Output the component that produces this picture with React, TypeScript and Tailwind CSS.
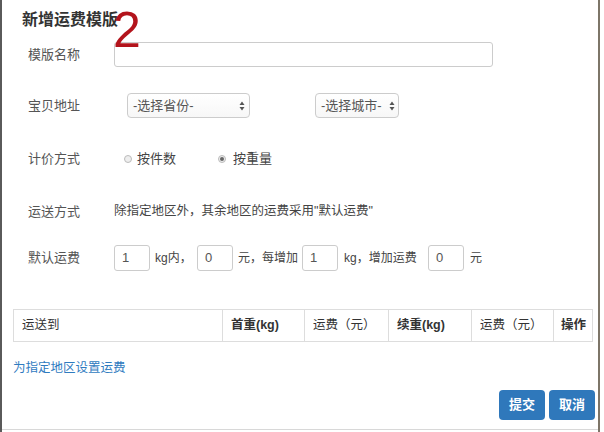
import React from "react";

const font = { fontFamily: '"Liberation Sans", "Noto Sans CJK SC", sans-serif' };

function Arrows() {
  return (
    <svg width="6" height="10" viewBox="0 0 6 10" className="shrink-0">
      <path d="M3 0.5 L5.5 4 L0.5 4 Z" fill="#555" />
      <path d="M3 9.5 L5.5 6 L0.5 6 Z" fill="#555" />
    </svg>
  );
}

function SmallInput({ v }: { v: string }) {
  return (
    <div className="w-[36px] h-[26px] shrink-0 border border-[#ccc] rounded-[3px] flex items-center pl-[7px] text-[13px] text-[#555] bg-white">
      {v}
    </div>
  );
}

function Radio({ checked }: { checked?: boolean }) {
  return (
    <span className="w-[8px] h-[8px] rounded-full border border-[#bbb] bg-[#eee] flex items-center justify-center">
      {checked && <span className="w-[4px] h-[4px] rounded-full bg-[#666]" />}
    </span>
  );
}

export default function App() {
  return (
    <div className="w-[604px] h-[432px] flex bg-white overflow-hidden" style={font}>
      <div className="w-[2px] h-full bg-[#5a5a5a]" />
      <div className="w-[596px] h-[430px] border-b border-[#d8d8d8] relative flex flex-col text-[#555]">
        <div className="pl-[20px] pt-[10px] h-[29px] leading-[19px] text-[16px] text-[#333] font-semibold">
          新增运费模版
        </div>
        <div className="absolute left-[111px] top-[2px] text-[50px] leading-[56px] text-[#b3141c]" style={{ fontFamily: '"Liberation Sans", sans-serif' }}>
          2
        </div>

        <div className="mt-[13px] flex items-center h-[25px] text-[13px]">
          <div className="w-[112px] pl-[26px]">模版名称</div>
          <div className="w-[379px] h-[25px] border border-[#ccc] rounded-[3px] bg-white" />
        </div>

        <div className="mt-[26px] flex items-center h-[25px] text-[13px]">
          <div className="w-[125px] pl-[26px]">宝贝地址</div>
          <div className="w-[123px] h-[25px] border border-[#ccc] rounded-[4px] flex items-center justify-between pl-[5px] pr-[4px] bg-gradient-to-b from-white to-[#f7f7f7]">
            <span>-选择省份-</span>
            <Arrows />
          </div>
          <div className="w-[65px]" />
          <div className="w-[84px] h-[25px] border border-[#ccc] rounded-[4px] flex items-center justify-between pl-[5px] pr-[3px] bg-gradient-to-b from-white to-[#f7f7f7]">
            <span>-选择城市-</span>
            <Arrows />
          </div>
        </div>

        <div className="mt-[28px] flex items-center h-[25px] text-[13px]">
          <div className="w-[122px] pl-[26px]">计价方式</div>
          <Radio />
          <span className="ml-[5px] text-[#444]">按件数</span>
          <span className="w-[42px]" />
          <Radio checked />
          <span className="ml-[7px] text-[#444]">按重量</span>
        </div>

        <div className="mt-[28px] flex items-center h-[25px] text-[13px]">
          <div className="w-[112px] pl-[26px]">运送方式</div>
          <span className="text-[12.5px] text-[#444]">除指定地区外，其余地区的运费采用"默认运费"</span>
        </div>

        <div className="mt-[21px] flex items-center h-[26px] text-[13px]">
          <div className="w-[112px] pl-[26px]">默认运费</div>
          <SmallInput v="1" />
          <span className="ml-[5px] w-[42px] text-[12px] text-[#444]">kg内，</span>
          <SmallInput v="0" />
          <span className="ml-[5px] w-[64px] text-[12px] text-[#444]">元，每增加</span>
          <SmallInput v="1" />
          <span className="ml-[6px] w-[84px] text-[12px] text-[#444]">kg，增加运费</span>
          <SmallInput v="0" />
          <span className="ml-[6px] text-[12px] text-[#444]">元</span>
        </div>

        <div className="mt-[38px] ml-[11px] w-[580px] h-[33px] border border-[#ddd] flex text-[12.5px] text-[#333]">
          <div className="w-[208px] flex items-center pl-[8px]">运送到</div>
          <div className="w-[82px] flex items-center pl-[8px] border-l border-[#ddd] font-semibold">首重(kg)</div>
          <div className="w-[84px] flex items-center pl-[8px] border-l border-[#ddd]">运费（元）</div>
          <div className="w-[83px] flex items-center pl-[8px] border-l border-[#ddd] font-semibold">续重(kg)</div>
          <div className="w-[82px] flex items-center pl-[8px] border-l border-[#ddd]">运费（元）</div>
          <div className="flex-1 flex items-center pl-[7px] border-l border-[#ddd] font-semibold">操作</div>
        </div>

        <div className="mt-[19px] ml-[11px] h-[14px] leading-[14px] text-[12.5px] text-[#2f7bbf]">为指定地区设置运费</div>

        <div className="mt-[15px] flex justify-end gap-[4px] pr-[3px]">
          <div className="w-[46px] h-[30px] rounded-[4px] bg-[#2f78bb] text-white text-[13px] font-bold flex items-center justify-center">提交</div>
          <div className="w-[46px] h-[30px] rounded-[4px] bg-[#2f78bb] text-white text-[13px] font-bold flex items-center justify-center">取消</div>
        </div>
      </div>
      <div className="w-[2px] h-full bg-[#7d7568]" />
      <div className="flex-1 h-full bg-white" />
    </div>
  );
}
